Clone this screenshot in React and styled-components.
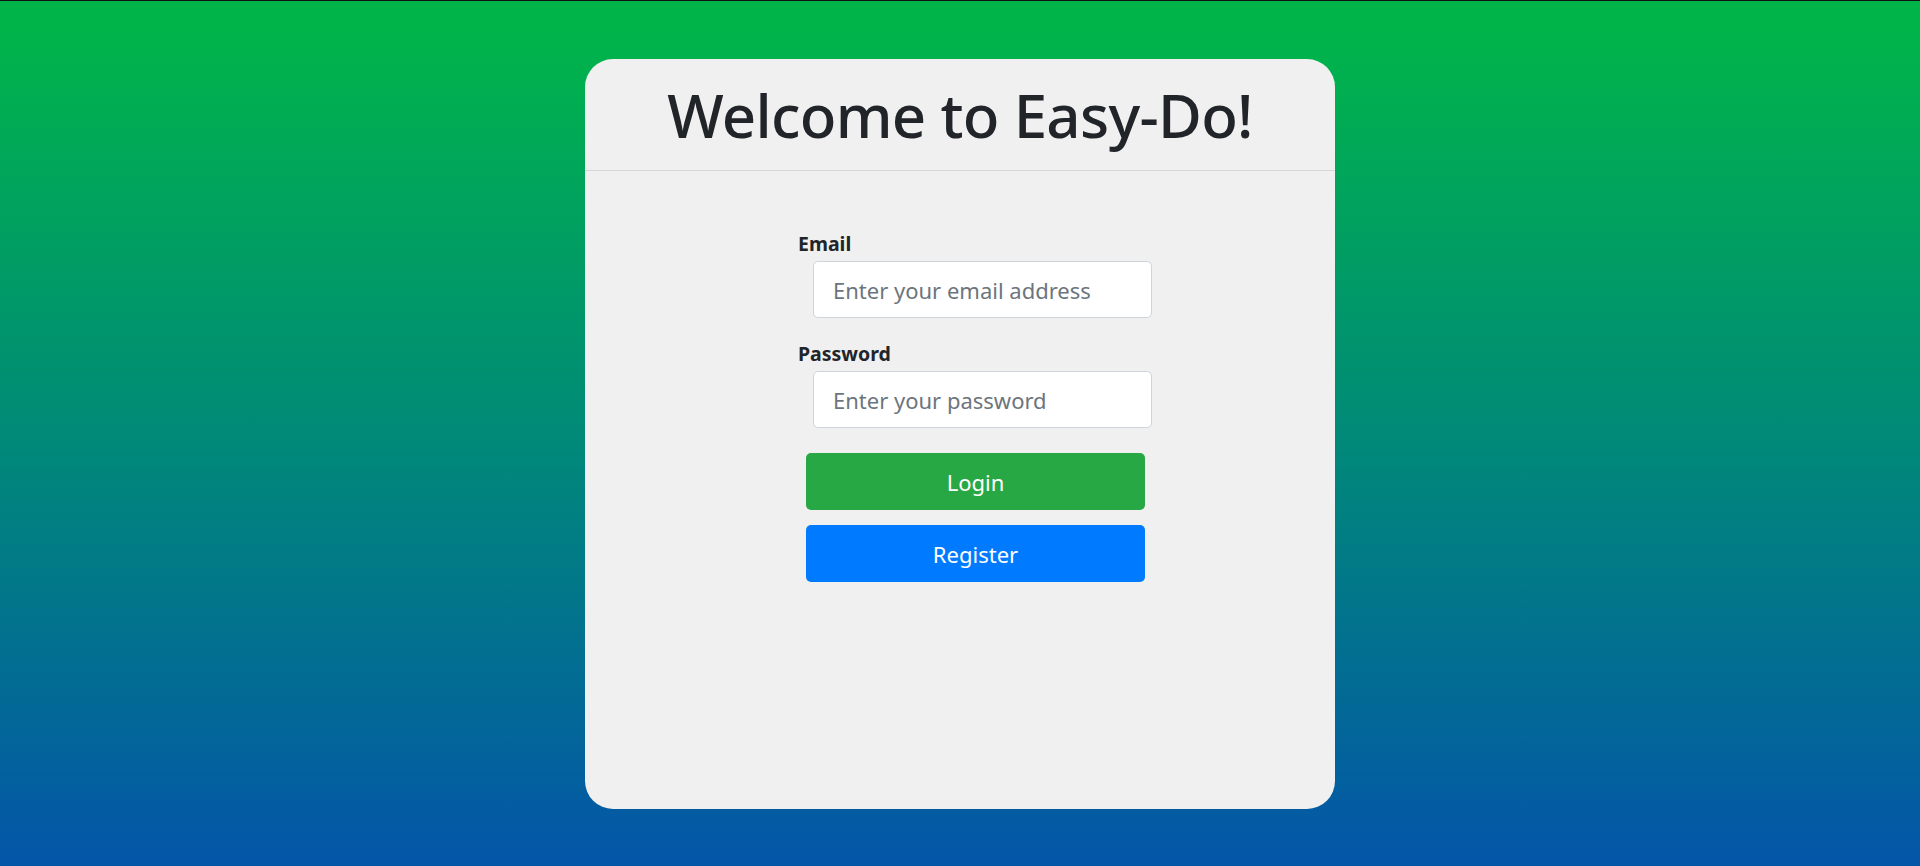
import React from 'react'
import styled, { createGlobalStyle } from 'styled-components'

const GlobalStyle = createGlobalStyle`
    html, body {
        margin: 0;
        padding: 0;
    }

    body {
        font-family: "Noto Sans", "Open Sans", "Liberation Sans", sans-serif;
        color: #212529;
    }
`

const Page = styled.div`
    height: 866px;
    box-sizing: border-box;
    border-top: 1px solid #111;
    background: linear-gradient(180deg, #00b44a 0%, #00b44a 4%, #008a78 50%, #0455a8 100%);
    display: flex;
    justify-content: center;
    padding-top: 58px;
`

const Card = styled.div`
    width: 750px;
    height: 750px;
    background-color: #f0f0f0;
    border-radius: 28px;
    display: flex;
    flex-direction: column;
`

const Header = styled.div`
    height: 111px;
    border-bottom: 1px solid #d6d6d6;
    display: flex;
    align-items: center;
    justify-content: center;

    > h1 {
        margin: 0;
        font-size: 60px;
        font-weight: 500;
        letter-spacing: -0.7px;
        color: #212529;
    }
`

const Form = styled.form`
    padding: 61px 0 0 213px;
    display: flex;
    flex-direction: column;
`

const Label = styled.label`
    display: block;
    font-size: 19.5px;
    font-weight: 700;
    line-height: 24px;
    color: #212529;
    margin-top: ${props => props.$first ? '0' : '24px'};
`

const Input = styled.input`
    box-sizing: border-box;
    width: 339px;
    height: 57px;
    margin: 5px 0 0 15px;
    padding: 0 19px;
    font-family: inherit;
    font-size: 22px;
    color: #495057;
    background: #fff;
    border: 1px solid #ced4da;
    border-radius: 5px;
    outline: none;

    &::placeholder {
        color: #6c757d;
    }
`

const Actions = styled.div`
    margin: 25px 0 0 8px;
    display: flex;
    flex-direction: column;
    gap: 15px;
`

const Button = styled.button`
    box-sizing: border-box;
    width: 339px;
    height: 57px;
    border: none;
    border-radius: 5px;
    font-family: inherit;
    font-size: 22px;
    color: #fff;
    background-color: ${props => props.$variant === 'register' ? '#007bff' : '#28a745'};
    cursor: pointer;
`

export default function App() {
    return (
        <>
            <GlobalStyle />
            <Page>
                <Card>
                    <Header>
                        <h1>Welcome to Easy-Do!</h1>
                    </Header>
                    <Form onSubmit={e => e.preventDefault()}>
                        <Label $first htmlFor='email'>Email</Label>
                        <Input id='email' type='email' placeholder='Enter your email address' />
                        <Label htmlFor='password'>Password</Label>
                        <Input id='password' type='password' placeholder='Enter your password' />
                        <Actions>
                            <Button type='submit'>Login</Button>
                            <Button type='button' $variant='register'>Register</Button>
                        </Actions>
                    </Form>
                </Card>
            </Page>
        </>
    )
}
